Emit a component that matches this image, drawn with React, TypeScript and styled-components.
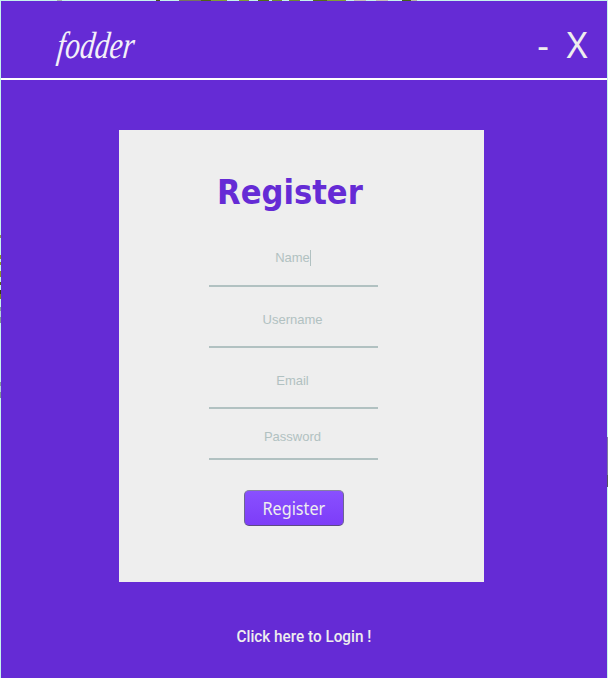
import React from "react";
import styled, { createGlobalStyle } from "styled-components";

const PURPLE = "#652bd5";
const PALE = "#eeeeee";
const SAGE = "#b1c1c1";

const GlobalStyle = createGlobalStyle`
  * { box-sizing: border-box; }
  body { margin: 0; overflow: hidden; font-family: "Liberation Sans", Arial, sans-serif; }
`;

const Desktop = styled.div`
  display: grid;
  grid-template-columns: 1px 606px 1px;
  grid-template-rows: 1px 677px;
  width: 608px;
  height: 678px;
  background: #c5f3ec;
`;

const TopEdge = styled.div`
  grid-column: 1 / -1;
  background: linear-gradient(
    90deg,
    #c5f3ec 57px, #a6b5b0 57px 62px, #c5f3ec 62px 156px,
    #4c501c 156px 160px, #c5f3ec 160px 179px, #77755e 179px 201px,
    #4f6219 201px 211px, #809d39 211px 227px, #c5f3ec 227px 239px,
    #809d39 239px 249px, #c5f3ec 249px 258px, #4f6b19 258px 269px,
    #c5f3ec 269px 272px, #6e8a32 272px 282px, #c5f3ec 282px 289px,
    #6e8a32 289px 300px, #c5f3ec 300px 313px, #556b1c 313px 327px,
    #809d39 327px 346px, #c5f3ec 346px 354px, #c4bbb7 354px 366px,
    #c5f3ec 366px 376px, #c4bbb7 376px 388px, #c5f3ec 388px 402px,
    #44601a 402px 411px, #b7b3a5 411px 417px, #c5f3ec 417px
  );
`;

const LeftEdge = styled.div`
  background: linear-gradient(
    #c5f3ec 234px, #8f9958 234px 237px, #c5f3ec 237px 254px,
    #8c942b 254px 258px, #c5f3ec 258px 261px, #8c942b 261px 264px,
    #c5f3ec 264px 270px, #8c942b 270px 276px, #c5f3ec 276px 281px,
    #59601d 281px 284px, #c5f3ec 284px 289px, #373b15 289px 293px,
    #7f8827 293px 298px, #c5f3ec 298px 306px, #829e9e 306px 310px,
    #b4d2dc 310px 316px, #7e9695 316px 322px, #c5f3ec 322px 381px,
    #829e9e 381px 385px, #b4d2dc 385px 391px, #7e9695 391px 397px, #c5f3ec 397px
  );
`;

const RightEdge = styled.div`
  background: linear-gradient(#c5f3ec 436px, #7c7ba0 436px 474px, #525360 474px 486px, #c5f3ec 486px);
`;

const Window = styled.main`
  display: flex;
  flex-direction: column;
  align-items: center;
  background: ${PURPLE};
`;

const Header = styled.header`
  display: flex;
  justify-content: space-between;
  align-self: stretch;
  height: 79px;
  padding: 22px 19px 0 55px;
  border-bottom: 2px solid #fff;
  color: #f3f0f9;
`;

const Logo = styled.span`
  font: italic 38px/44px "Liberation Serif", "Times New Roman", serif;
  transform: scaleX(0.78) skewX(-8deg);
  transform-origin: 0 34px;
  white-space: nowrap;
`;

const Controls = styled.div`
  display: flex;
  gap: 17px;
`;

const Control = styled.button<{ $width: number }>`
  width: ${(p) => p.$width}px;
  height: 44px;
  padding: 0;
  border: 0;
  background: none;
  color: ${PALE};
  font: 36px/44px "Noto Sans", sans-serif;
  display: flex;
  justify-content: center;
`;

const Card = styled.form`
  display: flex;
  flex-direction: column;
  width: 365px;
  height: 452px;
  margin: 50px 6px 0 0;
  padding: 40px 106px 0 90px;
  background: ${PALE};
`;

const Title = styled.h1`
  width: 149px;
  height: 48px;
  margin: 0 0 0 8px;
  color: ${PURPLE};
  font: bold 33px/46px "DejaVu Sans", sans-serif;
  white-space: nowrap;
  transform: scaleX(0.93);
  transform-origin: 0 0;
`;

const Field = styled.label<{ $height: number; $textTop: number; $shift?: number }>`
  display: flex;
  justify-content: center;
  height: ${(p) => p.$height}px;
  padding-top: ${(p) => p.$textTop}px;
  padding-right: ${(p) => p.$shift ?? 1}px;
  border-bottom: 2px solid ${SAGE};
  color: ${SAGE};
  font-size: 13px;
  line-height: 16px;
`;

const Caret = styled.i`
  width: 1px;
  height: 16px;
  background: ${SAGE};
`;

const Submit = styled.button`
  display: flex;
  justify-content: center;
  width: 100px;
  height: 36px;
  margin: 30px 0 0 35px;
  padding: 5px 0 0;
  border: 1px solid #6d6592;
  border-top-color: #8580a3;
  border-bottom-color: #5c4b83;
  border-radius: 5px;
  background: linear-gradient(#8950ff, #7d3df8);
  color: ${PALE};
  font: 18px/25px "Noto Sans", sans-serif;
`;

const Squeeze = styled.span<{ $x: number }>`
  transform: scaleX(${(p) => p.$x});
  white-space: nowrap;
`;

const LoginLink = styled.a`
  display: flex;
  justify-content: center;
  width: 160px;
  margin-top: 42px;
  color: ${PALE};
  font: 500 17px/24px Roboto, sans-serif;
`;

export default function App() {
  return (
    <>
      <GlobalStyle />
      <Desktop>
        <TopEdge />
        <LeftEdge />
        <Window>
          <Header>
            <Logo>fodder</Logo>
            <Controls>
              <Control $width={12}>-</Control>
              <Control $width={22}>X</Control>
            </Controls>
          </Header>
          <Card>
            <Title>Register</Title>
            <Field $height={69} $textTop={32} $shift={0}>Name<Caret /></Field>
            <Field $height={61} $textTop={25}>Username</Field>
            <Field $height={61} $textTop={25}>Email</Field>
            <Field $height={51} $textTop={20}>Password</Field>
            <Submit type="button"><Squeeze $x={0.9}>Register</Squeeze></Submit>
          </Card>
          <LoginLink><Squeeze $x={0.9}>Click here to Login !</Squeeze></LoginLink>
        </Window>
        <RightEdge />
      </Desktop>
    </>
  );
}
